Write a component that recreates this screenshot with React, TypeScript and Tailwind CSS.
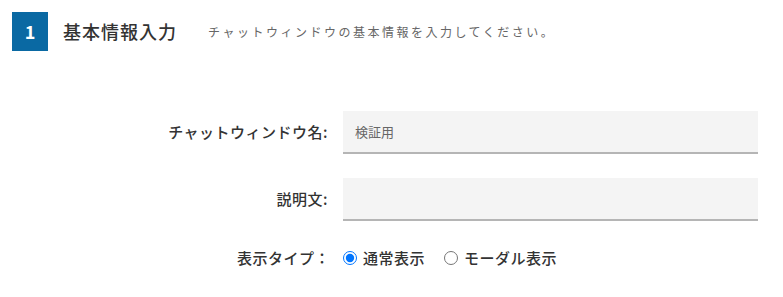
import { useState } from 'react'

const font = "font-['Noto_Sans_CJK_JP','Noto_Sans',sans-serif]"

function FieldRow({ label, children }: { label: string; children: React.ReactNode }) {
  return (
    <div className="flex items-center">
      <label className="w-[328px] shrink-0 text-right text-[15px] font-medium tracking-[0.5px] text-[#333]">{label}</label>
      <div className="ml-[15px] flex-1">{children}</div>
    </div>
  )
}

export default function App() {
  const [name, setName] = useState('検証用')
  const [desc, setDesc] = useState('')
  const [type, setType] = useState<'normal' | 'modal'>('normal')

  return (
    <div className={`w-[783px] h-[297px] bg-white ${font}`}>
      <div className="flex items-center pl-3 pt-3">
        <div className="flex h-[39px] w-9 items-center justify-center bg-[#0a69a3] text-[18px] font-bold text-white">1</div>
        <h2 className="ml-[15px] text-[18px] font-medium tracking-[1px] text-[#333]">基本情報入力</h2>
        <p className="ml-[31px] text-[12px] tracking-[2.5px] text-[#666]">チャットウィンドウの基本情報を入力してください。</p>
      </div>

      <div className="mt-[60px] mr-[25px] flex flex-col gap-6">
        <FieldRow label="チャットウィンドウ名:">
          <input
            value={name}
            onChange={(e) => setName(e.target.value)}
            className="h-[43px] w-full border-b-2 border-[#b5b5b5] bg-[#f4f4f4] px-3 text-[13px] text-[#666] outline-none"
          />
        </FieldRow>
        <FieldRow label="説明文:">
          <input
            value={desc}
            onChange={(e) => setDesc(e.target.value)}
            className="h-[43px] w-full border-b-2 border-[#b5b5b5] bg-[#f4f4f4] px-3 text-[13px] text-[#666] outline-none"
          />
        </FieldRow>
        <div className="mt-[2px] flex items-center">
          <span className="w-[330px] shrink-0 text-right text-[15px] font-medium tracking-[0.5px] text-[#333]">表示タイプ：</span>
          <label className="ml-[13px] flex items-center gap-[6px] text-[15px] font-medium tracking-[0.5px] text-[#333]">
            <input type="radio" name="type" checked={type === 'normal'} onChange={() => setType('normal')} className="m-0 h-[14px] w-[14px]" />
            通常表示
          </label>
          <label className="ml-[19px] flex items-center gap-[6px] text-[15px] font-medium tracking-[0.5px] text-[#333]">
            <input type="radio" name="type" checked={type === 'modal'} onChange={() => setType('modal')} className="m-0 h-[14px] w-[14px]" />
            モーダル表示
          </label>
        </div>
      </div>
    </div>
  )
}
